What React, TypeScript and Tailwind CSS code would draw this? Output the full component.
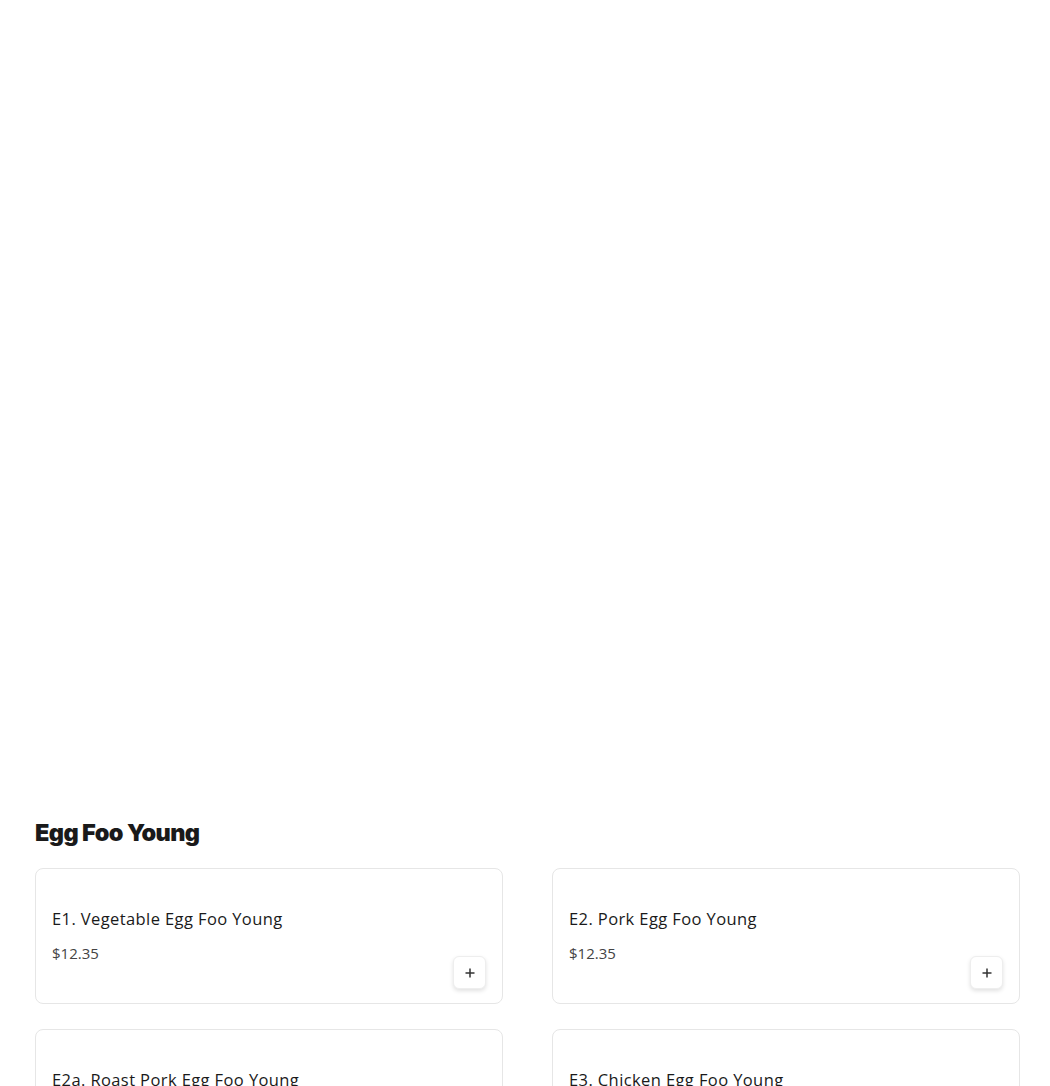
import React from "react";

const items = [
  { name: "E1. Vegetable Egg Foo Young", price: "$12.35" },
  { name: "E2. Pork Egg Foo Young", price: "$12.35" },
  { name: "E2a. Roast Pork Egg Foo Young", price: "$12.35" },
  { name: "E3. Chicken Egg Foo Young", price: "$12.35" },
];

function Card({ name, price }: { name: string; price: string }) {
  return (
    <div className="h-[136px] rounded-lg border border-[#e6e6e6] bg-white px-4 pt-[38px]">
      <div className="text-[16.5px] font-medium leading-6 tracking-[0.4px] text-[#1a1a1a]">{name}</div>
      <div className="mt-[12px] flex items-start justify-between">
        <div className="text-[15px] leading-5 text-[#444]">{price}</div>
        <button className="mt-[13px] flex h-[33px] w-[33px] items-center justify-center rounded-md border border-[#eee] bg-white shadow-[0_2px_4px_rgba(0,0,0,0.12)]">
          <svg width="12" height="12" viewBox="0 0 12 12" fill="none" stroke="#333" strokeWidth="1.5">
            <path d="M6 1.5v9M1.5 6h9" />
          </svg>
        </button>
      </div>
    </div>
  );
}

export default function App() {
  return (
    <div className="h-[1086px] overflow-hidden bg-white" style={{ fontFamily: '"Open Sans", "Noto Sans", sans-serif' }}>
      <div className="h-[817px]" />
      <div className="pl-[35px] pr-[30px]">
        <h2 className="text-[23.5px] font-black leading-8 tracking-[-0.6px] text-[#1a1a1a]" style={{ fontFamily: 'Inter, "Open Sans", sans-serif' }}>
          Egg Foo Young
        </h2>
        <div className="mt-[19px] grid grid-cols-2 gap-x-[49px] gap-y-[25px]">
          {items.map((it) => (
            <Card key={it.name} {...it} />
          ))}
        </div>
      </div>
    </div>
  );
}
